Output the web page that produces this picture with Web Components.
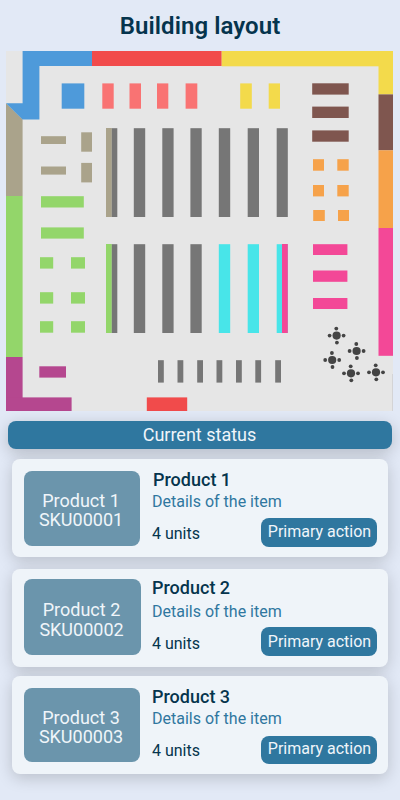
<!DOCTYPE html>
<html lang="en">
<head>
<meta charset="utf-8">
<title>Building layout</title>
<style>
html, body { margin: 0; height: 100%; }
body { background: #e2e9f6; font-family: Roboto, sans-serif; color: #05344d; overflow: hidden; }
</style>
</head>
<body>
<layout-page>
  <floor-map></floor-map>
  <status-banner>Current status</status-banner>
  <product-card number="1" sku="SKU00001" style="--h:98px;--gap:10px;--thumb-top:12px;--thumb-h:75px;--thumb-w:116px;--label-top:19.5px;--label-lh:19px;--title-top:11px;--title-x:13px;--text-shift:-1px;--detail-gap:1.5px;--units-top:64.5px;--btn-top:59px;--btn-h:29px;--btn-pad:3.5px"></product-card>
  <product-card number="2" sku="SKU00002" style="--h:98px;--gap:12px;--thumb-top:10px;--thumb-h:76px;--thumb-w:117px;--label-top:21px;--label-lh:20px;--title-top:9px;--title-x:11px;--text-shift:0px;--detail-gap:3.5px;--units-top:64.5px;--btn-top:58px;--btn-h:29px;--btn-pad:4.5px"></product-card>
  <product-card number="3" sku="SKU00003" style="--h:98px;--gap:9px;--thumb-top:12px;--thumb-h:74px;--thumb-w:116px;--label-top:19.5px;--label-lh:19px;--title-top:11px;--title-x:12px;--text-shift:0px;--detail-gap:1.5px;--units-top:64.5px;--btn-top:60px;--btn-h:28px;--btn-pad:2.5px"></product-card>
</layout-page>
<script>
class LayoutPage extends HTMLElement {
  constructor() {
    super();
    this.attachShadow({ mode: 'open' }).innerHTML = `
      <style>
        :host { display: flex; flex-direction: column; height: 800px; width: 400px; }
        h1 { margin: 0; height: 51px; box-sizing: border-box; padding-top: 12px; font-size: 24px; line-height: 28px; font-weight: 600; letter-spacing: .06px; text-align: center; }
      </style>
      <h1>Building layout</h1><slot></slot>`;
  }
}

class FloorMap extends HTMLElement {
  constructor() {
    super();
    // Each entry is [fill, x1, y1, x2, y2].
    const shapes = [];
    const add = (fill, x1, y1, x2, y2) => shapes.push([fill, x1, y1, x2, y2]);
    const blue = '#4e9ada', red = '#f14b4b', coral = '#f97373', yellow = '#f3da4b', brown = '#7f564f',
      orange = '#f6a24a', pink = '#f34897', tan = '#aaa38b', green = '#93d66a', purple = '#b5478f',
      gray = '#767676', cyan = '#48e5e9';
    add(green, 6, 196, 22.6, 357);
    add(purple, 6, 357, 22.6, 411);
    add(purple, 6, 397.4, 71.6, 411);
    add(red, 92, 51, 221.7, 66);
    add(yellow, 221.7, 51, 393, 66.3);
    add(yellow, 378.5, 51, 393, 94.4);
    add(brown, 378.5, 94.4, 393, 150.3);
    add(orange, 378.5, 150.3, 393, 228);
    add(pink, 378.5, 228, 393, 355.8);
    add('#cccccf', 392.3, 374, 393, 411);
    add(blue, 61.7, 83.4, 84.3, 108.7);
    for (const [a, b] of [[102.3, 113.7], [129.5, 141], [157, 168.3], [185.6, 197.3]]) add(coral, a, 83.4, b, 108.7);
    for (const [a, b] of [[240.2, 251.8], [268.7, 280]]) add(yellow, a, 83.4, b, 108.7);
    for (const [a, b] of [[83.3, 94.6], [106.6, 118], [130.4, 141.7]]) add(brown, 312.2, a, 348.7, b);
    for (const [a, b] of [[136.2, 144], [166.5, 174.6]]) add(tan, 41, a, 66, b);
    for (const [a, b] of [[132.3, 151.7], [162.9, 182.4]]) add(tan, 81.2, a, 92, b);
    for (const [a, b] of [[196.2, 207.5], [227.4, 238.6]]) add(green, 41, a, 83.8, b);
    add(tan, 106, 128, 111.8, 217);
    add(green, 106, 244, 111.8, 333);
    const bars = [[111.8, 117.3], [133.8, 145.2], [162.3, 173.6], [190.4, 201.7], [218.8, 230.2], [247.7, 259], [276.7, 287.8]];
    bars.forEach(([a, b], i) => {
      add(gray, a, 128.2, b, 217);
      add(i > 3 ? cyan : gray, a, 244.2, b, 333);
    });
    add(pink, 282, 244, 287.8, 333);
    for (const [a, b] of [[159.2, 170.7], [185, 196.4]]) { add(orange, 313, a, 324, b); add(orange, 337.3, a, 348.7, b); }
    add(orange, 313.2, 210, 324.8, 221);
    add(orange, 338, 210, 349, 221);
    for (const [a, b] of [[244.2, 255], [270.5, 281.8], [298, 309]]) add(pink, 313, a, 347.4, b);
    for (const [a, b] of [[257.2, 268.6], [292.2, 303.6], [321.2, 332.7]]) { add(green, 40, a, 53.2, b); add(green, 71, a, 85, b); }
    add(purple, 39.3, 366.3, 66, 377.6);
    for (const x of [158, 177.5, 197.2, 216.5, 236, 255.3, 275.2]) add(gray, x, 360.2, x + 5.8, 382.6);
    add(red, 146.8, 397.4, 187.2, 411);
    const rects = shapes.map(([f, a, b, c, d]) =>
      `<rect x="${a}" y="${b}" width="${(c - a).toFixed(1)}" height="${(d - b).toFixed(1)}" fill="${f}"/>`).join('');
    const tables = [[336.6, 335.6], [356.6, 351], [332.2, 360], [351, 373.3], [376, 372.3]].map(([x, y]) =>
      `<g fill="#444" transform="translate(${x} ${y})"><circle r="4.1"/><circle cx="-7" r="1.9"/><circle cx="7" r="1.9"/><circle cx="-.3" cy="-7" r="1.9"/><circle cx=".3" cy="7" r="1.9"/></g>`).join('');
    this.attachShadow({ mode: 'open' }).innerHTML = `
      <style>
        :host { display: block; margin-left: 6px; width: 387px; height: 360px; flex: none; }
        svg { display: block; }
      </style>
      <svg width="387" height="360" viewBox="6 51 387 360">
        <rect x="6" y="51" width="387" height="360" fill="#e6e6e6"/>
        <path fill="${tan}" d="M6 103.3L22.6 119.3V196H6z"/>
        <path fill="${blue}" d="M22.6 51H92V66H39.4V119.4H22.6L6 103.2H22.6z"/>
        ${rects}${tables}
      </svg>`;
  }
}

class StatusBanner extends HTMLElement {
  constructor() {
    super();
    this.attachShadow({ mode: 'open' }).innerHTML = `
      <style>
        :host { display: block; flex: none; height: 28px; margin: 10px 8px 0; border-radius: 8px; background: #2f779f;
          color: #f0f5fa; font-size: 18px; line-height: 28px; text-align: center; box-shadow: 0 4px 16px rgba(0, 0, 0, .2); }
        span { display: inline-block; margin-right: 1px; }
      </style>
      <span><slot></slot></span>`;
  }
}

class ProductCard extends HTMLElement {
  connectedCallback() {
    this.attachShadow({ mode: 'open' }).innerHTML = `
      <style>
        :host { display: flex; flex: none; align-items: flex-start; box-sizing: border-box; height: var(--h); margin: var(--gap) 12px 0;
          padding: 0 11px 0 12px; border-radius: 8px; background: #eff4f9; box-shadow: 0 4px 16px rgba(0, 0, 0, .18); }
        .thumb { flex: none; box-sizing: border-box; width: var(--thumb-w); height: var(--thumb-h); margin-top: var(--thumb-top);
          padding: var(--label-top) 2px 0 0; border-radius: 8px; background: #6b95ac; color: #f0f5fa;
          font-size: 18px; line-height: var(--label-lh); text-align: center; }
        .thumb div { white-space: nowrap; }
        .info { flex: none; width: 140px; height: 98px; margin-left: var(--title-x); box-sizing: border-box; padding-top: var(--title-top);
          margin-right: -140px; }
        .title { font-size: 18px; line-height: 20px; font-weight: 500; }
        .detail { margin: var(--detail-gap) 0 0 var(--text-shift); font-size: 16px; line-height: 20px; color: #2f779f; white-space: nowrap; }
        .units { margin: 12px 0 0 var(--text-shift); font-size: 16px; line-height: 20px; }
        button { flex: none; display: block; margin: var(--btn-top) 0 0 auto; width: 116px; height: var(--btn-h); box-sizing: border-box;
          padding: var(--btn-pad) 0 0 1px; border: 0; border-radius: 8px; background: #2f779f; color: #f0f5fa;
          font: 16px/20px Roboto, sans-serif; white-space: nowrap; }
        button span { display: block; height: calc(var(--btn-h) - var(--btn-pad)); }
      </style>
      <div class="thumb"><div>Product ${this.getAttribute('number')}</div><div>${this.getAttribute('sku')}</div></div>
      <div class="info">
        <div class="title">Product ${this.getAttribute('number')}</div>
        <div class="detail">Details of the item</div>
        <div class="units">4 units</div>
      </div>
      <button><span>Primary action</span></button>`;
  }
}

customElements.define('layout-page', LayoutPage);
customElements.define('floor-map', FloorMap);
customElements.define('status-banner', StatusBanner);
customElements.define('product-card', ProductCard);
</script>
</body>
</html>
